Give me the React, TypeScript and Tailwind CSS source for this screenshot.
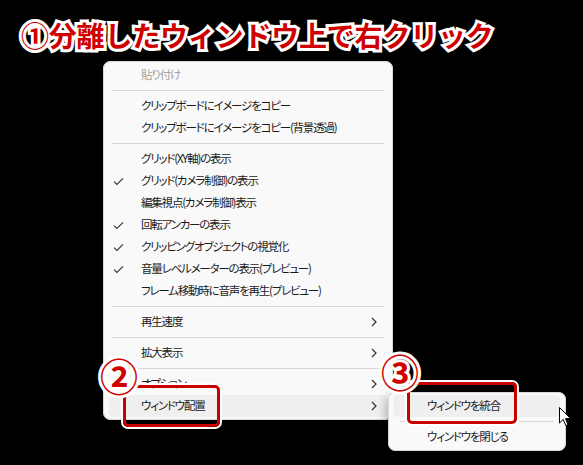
import React from 'react';

type Item =
  | { type: 'sep' }
  | { type: 'item'; label: string; checked?: boolean; disabled?: boolean; sub?: boolean; active?: boolean };

const items: Item[] = [
  { type: 'item', label: '貼り付け', disabled: true },
  { type: 'sep' },
  { type: 'item', label: 'クリップボードにイメージをコピー' },
  { type: 'item', label: 'クリップボードにイメージをコピー(背景透過)' },
  { type: 'sep' },
  { type: 'item', label: 'グリッド(XY軸)の表示' },
  { type: 'item', label: 'グリッド(カメラ制御)の表示', checked: true },
  { type: 'item', label: '編集視点(カメラ制御)表示' },
  { type: 'item', label: '回転アンカーの表示', checked: true },
  { type: 'item', label: 'クリッピングオブジェクトの視覚化', checked: true },
  { type: 'item', label: '音量レベルメーターの表示(プレビュー)', checked: true },
  { type: 'item', label: 'フレーム移動時に音声を再生(プレビュー)' },
  { type: 'sep' },
  { type: 'item', label: '再生速度', sub: true },
  { type: 'sep' },
  { type: 'item', label: '拡大表示', sub: true },
  { type: 'sep' },
  { type: 'item', label: 'オプション', sub: true },
  { type: 'item', label: 'ウィンドウ配置', sub: true, active: true },
];

const Check = () => (
  <svg width="11" height="9" viewBox="0 0 11 9" fill="none">
    <path d="M1 4.6 L3.9 7.4 L10 1.4" stroke="#333" strokeWidth="1.1" />
  </svg>
);

const Chevron = () => (
  <svg width="6" height="10" viewBox="0 0 6 10" fill="none">
    <path d="M1 1 L5 5 L1 9" stroke="#333" strokeWidth="1.2" />
  </svg>
);

// red text with white outline
const Outlined = ({ text, className }: { text: string; className: string }) => (
  <span className={`relative inline-block leading-none font-bold ${className}`}>
    <span className="absolute left-0 top-0 text-white [-webkit-text-stroke:6px_white]">{text}</span>
    <span className="relative text-[#d00000]">{text}</span>
  </span>
);

export default function App() {
  return (
    <div
      className="relative w-[583px] h-[465px] overflow-hidden bg-black"
      style={{ fontFamily: '"Noto Sans CJK JP", "Noto Sans", sans-serif' }}
    >
      {/* Title */}
      <div className="h-[61px] pl-[21px] pt-[21px]">
        <Outlined text="①分離したウィンドウ上で右クリック" className="text-[28px] tracking-[-0.2px]" />
      </div>

      {/* Context menu */}
      <div className="ml-[103px] w-[290px] rounded-[7px] border border-[#d6d6d6] bg-[#f9f9f9] px-[5px] py-[2px] text-[11.5px] tracking-[-1.2px] text-[#1b1b1b] whitespace-nowrap [font-feature-settings:'palt'] shadow-[0_4px_12px_rgba(0,0,0,0.4)]">
        {items.map((it, i) =>
          it.type === 'sep' ? (
            <div key={i} className="flex h-[9px] items-center px-[3px]">
              <div className="h-px w-full bg-[#d9d9d9]" />
            </div>
          ) : (
            <div
              key={i}
              className={`flex h-[22px] items-center rounded-[4px] ${it.active ? 'bg-[#efefef]' : ''}`}
            >
              <div className="flex w-[32px] shrink-0 items-center pl-[4px]">{it.checked && <Check />}</div>
              <span className={`flex-1 ${it.disabled ? 'text-[#a3a3a3]' : ''}`}>{it.label}</span>
              {it.sub && (
                <div className="pr-[10px]">
                  <Chevron />
                </div>
              )}
            </div>
          )
        )}
      </div>

      {/* Submenu */}
      <div className="absolute left-[388px] top-[392px] w-[178px] rounded-[7px] border border-[#d6d6d6] bg-[#f9f9f9] px-[5px] py-[2px] text-[11.5px] tracking-[-1.2px] text-[#1b1b1b] whitespace-nowrap [font-feature-settings:'palt'] shadow-[0_4px_12px_rgba(0,0,0,0.4)]">
        <div className="flex h-[22px] items-center rounded-[4px] bg-[#efefef] pl-[33px]">ウィンドウを統合</div>
        <div className="flex h-[9px] items-center px-[6px]">
          <div className="h-px w-full bg-[#d9d9d9]" />
        </div>
        <div className="flex h-[22px] items-center pl-[33px]">ウィンドウを閉じる</div>
      </div>

      {/* Annotation boxes */}
      <div className="absolute left-[123px] top-[385px] h-[42px] w-[97px] rounded-[5px] border-[3px] border-[#c80000] shadow-[0_0_0_2px_white]" />
      <div className="absolute left-[407px] top-[382px] h-[42px] w-[110px] rounded-[5px] border-[3px] border-[#c80000] shadow-[0_0_0_2px_white]" />

      <div className="absolute left-[100px] top-[356px]">
        <Outlined text="②" className="text-[38px]" />
      </div>
      <div className="absolute left-[381px] top-[352px]">
        <Outlined text="③" className="text-[38px]" />
      </div>

      {/* Mouse cursor */}
      <svg className="absolute left-[559px] top-[407px]" width="13" height="20" viewBox="0 0 13 20">
        <path
          d="M0.5 0.5 L0.5 16 L4.2 12.4 L6.8 18.6 L9 17.6 L6.5 11.6 L11.6 11.6 Z"
          fill="white"
          stroke="black"
          strokeWidth="1"
          strokeLinejoin="round"
        />
      </svg>
    </div>
  );
}
